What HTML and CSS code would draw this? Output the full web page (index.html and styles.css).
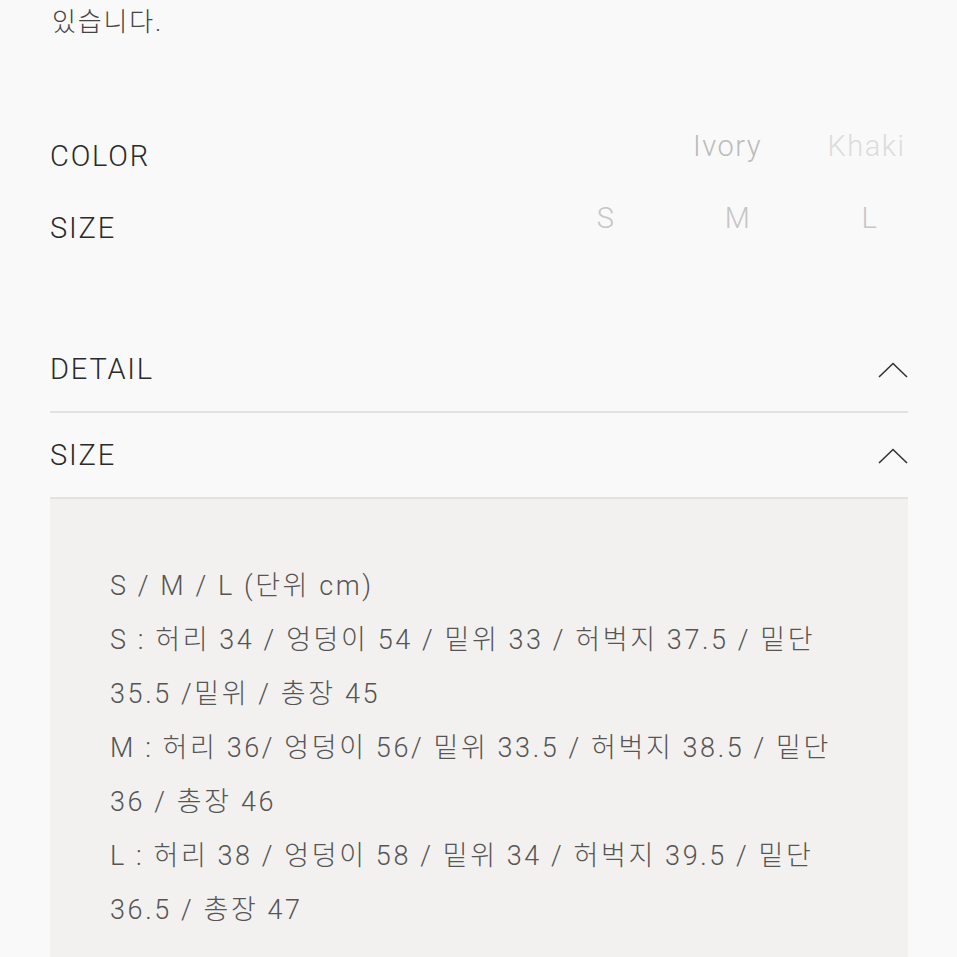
FILE: index.html
```html
<!DOCTYPE html>
<html>

<head>
    <title>상품 상세</title>
    <link rel="stylesheet" href="styles.css">
</head>

<body>
    <div class="container">
        <p class="desc">있습니다.</p>

        <div class="options">
            <div class="option-row">
                <span class="option-label">COLOR</span>
                <div class="option-values colors">
                    <span class="value ivory">Ivory</span>
                    <span class="value khaki">Khaki</span>
                </div>
            </div>
            <div class="option-row">
                <span class="option-label">SIZE</span>
                <div class="option-values sizes">
                    <span class="value">S</span>
                    <span class="value">M</span>
                    <span class="value">L</span>
                </div>
            </div>
        </div>

        <div class="accordion">
            <div class="accordion-head">
                <span>DETAIL</span>
                <svg class="chevron" width="30" height="16" viewBox="0 0 30 16">
                    <polyline points="1,15 15,1.5 29,15" fill="none" stroke="#333" stroke-width="1.6" />
                </svg>
            </div>
            <div class="accordion-head">
                <span>SIZE</span>
                <svg class="chevron" width="30" height="16" viewBox="0 0 30 16">
                    <polyline points="1,15 15,1.5 29,15" fill="none" stroke="#333" stroke-width="1.6" />
                </svg>
            </div>
            <div class="accordion-body">
                <p>S / M / L (단위 cm)</p>
                <p>S : 허리 34 / 엉덩이 54 / 밑위 33 / 허벅지 37.5 / 밑단<br>35.5 /밑위 / 총장 45</p>
                <p>M : 허리 36/ 엉덩이 56/ 밑위 33.5 / 허벅지 38.5 / 밑단<br>36 / 총장 46</p>
                <p>L : 허리 38 / 엉덩이 58 / 밑위 34 / 허벅지 39.5 / 밑단<br>36.5 / 총장 47</p>
            </div>
        </div>
    </div>
</body>

</html>
```

FILE: styles.css
```css
body {
    font-family: Roboto, "Noto Sans CJK KR", sans-serif;
    font-weight: 300;
    margin: 0;
    padding: 0;
    background-color: #f9f9f9;
    color: #2a2a2a;
    overflow: hidden;
}

.container {
    margin: 0 49px 0 50px;
}

.desc {
    margin: 0;
    padding-left: 2px;
    font-size: 26px;
    line-height: 44px;
    letter-spacing: 1.8px;
    color: #444;
}

.options {
    margin-top: 76px;
}

.option-row {
    display: flex;
    align-items: flex-start;
    height: 72px;
}

.option-label {
    font-size: 29px;
    line-height: 72px;
    letter-spacing: 1.8px;
}

.option-values {
    display: flex;
    margin-left: auto;
    margin-right: -28px;
    font-size: 29px;
    line-height: 52px;
    letter-spacing: 1.5px;
}

.option-values .value {
    text-align: center;
}

.colors .value {
    width: 139px;
}

.sizes .value {
    width: 132px;
    color: #c6c6c6;
}

.ivory {
    color: #bcbcbc;
}

.khaki {
    color: #dcdcdc;
}

.accordion {
    margin-top: 63px;
}

.accordion-head {
    display: flex;
    justify-content: space-between;
    align-items: center;
    height: 84px;
    border-bottom: 2px solid #e2e2e2;
    font-size: 29px;
    letter-spacing: 1.8px;
}

.chevron {
    display: block;
    margin-top: 2px;
}

.accordion-body {
    background-color: #f2f1ef;
    padding: 60px 30px 40px 60px;
    color: #555;
    font-size: 27px;
    line-height: 54px;
    letter-spacing: 2.6px;
}

.accordion-body p {
    margin: 0;
}
```
